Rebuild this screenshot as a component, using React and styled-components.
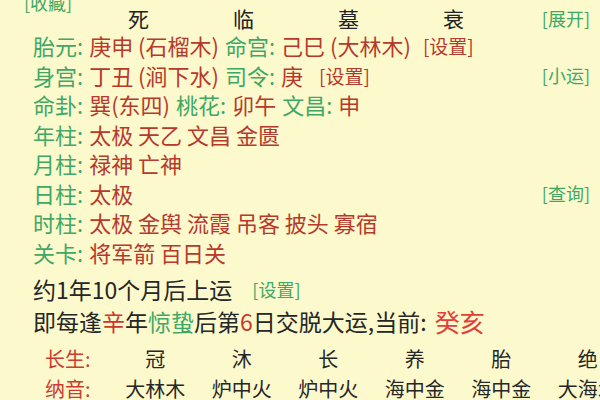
import React from "react";
import styled, { createGlobalStyle } from "styled-components";

const GlobalStyle = createGlobalStyle`
  html, body {
    margin: 0;
    padding: 0;
    background: #fcf9cd;
  }
  body {
    font-family: "Noto Sans CJK SC", "Noto Sans", sans-serif;
  }
`;

const GREEN = "#3fa866";
const RED = "#b63a2c";

const Page = styled.div`
  width: 600px;
  height: 400px;
  overflow: hidden;
  background: #fcf9cd;
  color: #262626;
  display: flex;
  flex-direction: column;
`;

/* the row above is scrolled out of view, only its lower edge shows */
const CutRow = styled.div`
  height: 3px;
  overflow: hidden;
  display: flex;
  align-items: flex-end;
  padding-left: 228px;
  gap: 36px;
  font-size: 18px;
  line-height: 18px;
  color: #33384a;
`;

const TopRow = styled.div`
  height: 5px;
  display: flex;
  align-items: center;
  padding-left: 24px;
  font-size: 18px;
  line-height: 5px;
`;

const PhaseRow = styled.div`
  height: 26px;
  display: grid;
  grid-template-columns: 86px repeat(4, 105px) 1fr;
  align-items: center;
  font-size: 21px;
  line-height: 26px;
  color: #222;
`;

const Phase = styled.span`
  text-align: center;
`;

const Link = styled.span`
  color: ${(p) => p.$color || GREEN};
  font-size: ${(p) => p.$size || 18}px;
  margin-left: ${(p) => p.$ml || 0}px;
  white-space: nowrap;
`;

const RightLink = styled(Link)`
  margin-left: auto;
  padding-right: 10px;
  text-align: right;
`;

const InfoRow = styled.div`
  height: 29.5px;
  display: flex;
  align-items: center;
  padding-left: 33px;
  font-size: 22px;
  line-height: 29.5px;
  white-space: nowrap;
  color: ${RED};
`;

const Label = styled.span`
  color: ${GREEN};
  margin-right: 6px;
`;

const Val = styled.span`
  color: ${RED};
  margin-right: 6px;
`;

const LineRow = styled.div`
  height: ${(p) => p.$h || 29.5}px;
  margin-top: ${(p) => p.$mt || 0}px;
  display: flex;
  align-items: center;
  padding-left: 33px;
  font-size: 23px;
  white-space: nowrap;
  color: #262626;
`;

const Tint = styled.span`
  color: ${(p) => p.$color};
  font-size: ${(p) => (p.$size ? p.$size + "px" : "inherit")};
  margin-left: ${(p) => p.$ml || 0}px;
`;

const TableRow = styled.div`
  height: 30px;
  margin-top: ${(p) => p.$mt || 0}px;
  display: grid;
  grid-template-columns: 45px 67px repeat(6, 86.5px);
  align-items: center;
  font-size: 20px;
  white-space: nowrap;
  color: #262626;
`;

const RowLabel = styled.span`
  grid-column: 2;
  color: #cc3b30;
`;

const Cell = styled.span`
  text-align: center;
`;

const info = [
  {
    parts: [
      ["label", "胎元:"],
      ["val", "庚申 (石榴木)"],
      ["label", "命宫:"],
      ["val", "己巳 (大林木)"],
    ],
    setting: 6,
  },
  {
    parts: [
      ["label", "身宫:"],
      ["val", "丁丑 (涧下水)"],
      ["label", "司令:"],
      ["val", "庚"],
    ],
    setting: 10,
    right: "[小运]",
  },
  {
    parts: [
      ["label", "命卦:"],
      ["val", "巽(东四)"],
      ["label", "桃花:"],
      ["val", "卯午"],
      ["label", "文昌:"],
      ["val", "申"],
    ],
  },
  { parts: [["label", "年柱:"], ["val", "太极 天乙 文昌 金匮"]] },
  { parts: [["label", "月柱:"], ["val", "禄神 亡神"]] },
  { parts: [["label", "日柱:"], ["val", "太极"]], right: "[查询]" },
  {
    parts: [["label", "时柱:"], ["val", "太极 金舆 流霞 吊客 披头 寡宿"]],
  },
  { parts: [["label", "关卡:"], ["val", "将军箭 百日关"]] },
];

const phases = ["冠", "沐", "长", "养", "胎", "绝"];
const nayin = ["大林木", "炉中火", "炉中火", "海中金", "海中金", "大海水"];

export default function App() {
  return (
    <Page>
      <GlobalStyle />
      <CutRow>
        <span>大运流年</span>
        <span>小运</span>
        <Tint $color={GREEN} $ml={20}>
          流月
        </Tint>
      </CutRow>
      <TopRow>
        <Link>[收藏]</Link>
      </TopRow>
      <PhaseRow>
        <span />
        <Phase>死</Phase>
        <Phase>临</Phase>
        <Phase>墓</Phase>
        <Phase>衰</Phase>
        <RightLink>[展开]</RightLink>
      </PhaseRow>
      {info.map((row, i) => (
        <InfoRow key={i}>
          {row.parts.map(([kind, text], j) =>
            kind === "label" ? (
              <Label key={j}>{text}</Label>
            ) : (
              <Val key={j}>{text}</Val>
            )
          )}
          {row.setting && (
            <Link $color={RED} $size={19} $ml={row.setting}>
              [设置]
            </Link>
          )}
          {row.right && <RightLink>{row.right}</RightLink>}
        </InfoRow>
      ))}
      <LineRow $mt={7}>
        约1年10个月后上运
        <Link $ml={20}>[设置]</Link>
      </LineRow>
      <LineRow $h={35}>
        即每逢<Tint $color="#c8382c">辛</Tint>年<Tint $color={GREEN}>惊蛰</Tint>后第
        <Tint $color="#c8382c">6</Tint>日交脱大运,当前:&nbsp;
        <Tint $color="#e0403a" $size={25} $ml={3}>
          癸亥
        </Tint>
      </LineRow>
      <TableRow $mt={5}>
        <RowLabel>长生:</RowLabel>
        {phases.map((p, i) => (
          <Cell key={i}>{p}</Cell>
        ))}
      </TableRow>
      <TableRow $mt={1}>
        <RowLabel>纳音:</RowLabel>
        {nayin.map((p, i) => (
          <Cell key={i}>{p}</Cell>
        ))}
      </TableRow>
    </Page>
  );
}
